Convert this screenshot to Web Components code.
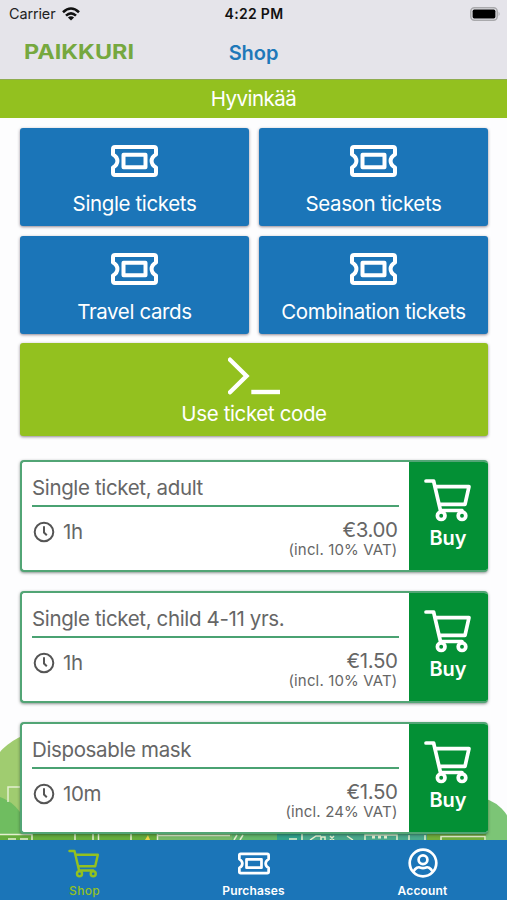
<!DOCTYPE html>
<html lang="en">
<head>
<meta charset="utf-8">
<title>Paikkuri</title>
<style>
  body {
    margin: 0;
    background: #fdfdfe;
    font-family: Inter, "Liberation Sans", sans-serif;
  }
</style>
</head>
<body>
<shop-app></shop-app>

<script>
const icons = {
  ticket: `<svg viewBox="0 0 47 32" fill="none" stroke="currentColor" stroke-width="4" stroke-linejoin="round">
    <path d="M4 2H43Q45 2 45 4V9.5Q40.6 12 40.6 16T45 22.5V28Q45 30 43 30H4Q2 30 2 28V22.5Q6.4 20 6.4 16T2 9.5V4Q2 2 4 2Z"/>
    <rect x="12.5" y="9.8" width="22" height="12.4"/></svg>`,
  cart: `<svg viewBox="0 0 48 44" fill="none" stroke="currentColor" stroke-width="3.7" stroke-linecap="round" stroke-linejoin="round">
    <path d="M2 3H9.6L16.5 32.5M10.8 8.7H45L41 26.3H15M16.5 32.5H38"/>
    <circle cx="17.2" cy="37.7" r="3.8"/><circle cx="38" cy="37.7" r="3.8"/></svg>`,
  prompt: `<svg viewBox="0 0 52 38" fill="none" stroke="currentColor" stroke-width="4.4">
    <path d="M2 2.7L18.5 19L2 35.3" stroke-linecap="round" stroke-width="4.4"/><path d="M23.3 35H52"/></svg>`,
  account: `<svg viewBox="0 0 30 30" fill="none" stroke="currentColor" stroke-width="2.7">
    <circle cx="15" cy="15" r="13.3"/><circle cx="15" cy="11.7" r="4.4"/>
    <path d="M5.5 23.5C7.5 19.5 10.5 18.8 12 19.5Q15 20.8 18 19.5C19.5 18.8 22.5 19.5 24.5 23.5"/></svg>`,
  clock: `<svg viewBox="0 0 22 22" fill="none" stroke="currentColor" stroke-width="2">
    <circle cx="11" cy="11" r="9.3"/><path d="M11 5.2V11.5L13.8 14.2"/></svg>`,
  wifi: `<svg viewBox="0 0 18 14">
    <g fill="none" stroke="#111" stroke-width="2.6"><path d="M1 5.2Q9 -2.2 17 5.2"/><path d="M4 8.6Q9 4 14 8.6"/></g>
    <path d="M9 13.6L5.9 10.5Q9 7.9 12.1 10.5Z" fill="#111"/></svg>`,
  battery: `<svg viewBox="0 0 31 14">
    <rect x=".8" y=".8" width="26.4" height="12.4" rx="3.6" fill="none" stroke="#a9a9ac" stroke-width="1.5"/>
    <rect x="2.6" y="2.6" width="22.8" height="8.8" rx="1.6" fill="#000"/>
    <path d="M28.6 4.8Q30.6 7 28.6 9.2Z" fill="#a9a9ac"/></svg>`
};

function define(name, render) {
  customElements.define(name, class extends HTMLElement {
    constructor() {
      super();
      this.attachShadow({ mode: "open" });
    }
    connectedCallback() {
      this.shadowRoot.innerHTML = render(this);
    }
  });
}

define("ui-icon", el => `
  <style>
    :host { display: block; flex: none; }
    svg { display: block; width: 100%; height: 100%; }
  </style>
  ${icons[el.getAttribute("name")]}`);

define("status-bar", () => `
  <style>
    :host { display: grid; grid-template-columns: 1fr auto 1fr; align-items: center; height: 27px; padding: 0 6px 0 9px; font-size: 14px; color: #222; }
    .left { display: flex; align-items: center; gap: 7px; }
    .carrier { font-size: 14.4px; letter-spacing: -.1px; }
    .time { font-weight: 600; letter-spacing: .3px; color: #111; margin-right: 2px; }
    .wifi { width: 18px; height: 14px; }
    .battery { width: 31px; height: 14px; justify-self: end; }
  </style>
  <div class="left"><span class="carrier">Carrier</span><ui-icon class="wifi" name="wifi"></ui-icon></div>
  <span class="time">4:22 PM</span>
  <ui-icon class="battery" name="battery"></ui-icon>`);

define("nav-header", () => `
  <style>
    :host { display: grid; grid-template-columns: 1fr auto 1fr; align-items: center; height: 52px; padding: 0 24px; box-sizing: border-box; }
    .logo { display: block; width: 120px; height: 28px; font-weight: 700; font-size: 19.6px; fill: #76a83f; }
    h1 { margin: 0; font-size: 20px; font-weight: 600; color: #1e78b9; letter-spacing: -.05px; }
  </style>
  <svg class="logo"><text x="0" y="20" textLength="110" lengthAdjust="spacingAndGlyphs">PAIKKURI</text></svg>
  <h1><slot></slot></h1>`);

define("category-button", el => `
  <style>
    :host {
      display: flex; flex-direction: column; align-items: center; box-sizing: border-box;
      height: 98px; padding-top: 17px; border-radius: 3px;
      background: #1b75b8; color: #fff; font-size: 20.5px;
      box-shadow: 0 1px 3px rgba(40, 20, 40, .5);
    }
    ui-icon { width: 47px; height: 32px; }
    span { margin-top: 15px; line-height: 24px; letter-spacing: -.37px; white-space: nowrap; }
    :host([wide]) { height: 93px; padding-top: 14px; background: #93c11f; }
    :host([wide]) ui-icon { width: 52px; height: 38px; }
    :host([wide]) span { margin-top: 7px; }
  </style>
  <ui-icon name="${el.getAttribute("icon")}"></ui-icon>
  <span><slot></slot></span>`);

define("ticket-card", el => `
  <style>
    :host {
      display: flex; box-sizing: border-box; height: 112px; overflow: hidden;
      border: 2px solid #52a575; border-right: 0; border-radius: 4px; background: #fff; color: #666;
      box-shadow: 0 1px 3px rgba(20, 40, 30, .5);
    }
    .info { flex: 1; padding: 0 10px; }
    .title { height: 43px; line-height: 51px; border-bottom: 2px solid #4aa272; font-size: 20.5px; letter-spacing: -.36px; }
    .row { display: flex; justify-content: space-between; }
    .duration { display: flex; align-items: center; height: 22px; margin-top: 14px; gap: 8px; padding-left: 1px; font-size: 20.5px; line-height: 22px; letter-spacing: -.4px; }
    .duration span { padding-bottom: 1px; }
    .duration ui-icon { width: 22px; height: 22px; color: #555; }
    .price { padding: 11px 1.5px 0 0; text-align: right; font-size: 20.5px; line-height: 24px; letter-spacing: -.4px; }
    small { display: block; font-size: 15px; line-height: 16px; letter-spacing: .15px; }
    .buy { display: flex; flex-direction: column; align-items: center; width: 79px; margin: -2px 0; padding: 18px 1px 0 0; box-sizing: border-box; background: #039035; color: #fff; font-weight: 600; font-size: 20px; line-height: 24px; }
    .buy ui-icon { width: 48px; height: 44px; margin-bottom: 4px; }
  </style>
  <div class="info">
    <div class="title"><slot></slot></div>
    <div class="row">
      <div class="duration"><ui-icon name="clock"></ui-icon><span>${el.getAttribute("duration")}</span></div>
      <div class="price">${el.getAttribute("price")}<small>(incl. ${el.getAttribute("vat")} VAT)</small></div>
    </div>
  </div>
  <div class="buy"><ui-icon name="cart"></ui-icon><span>Buy</span></div>`);

define("tab-item", el => `
  <style>
    :host { display: flex; flex-direction: column; align-items: center; color: #fff; font-size: 12px; font-weight: 600; letter-spacing: .15px; }
    :host([active]) { color: #93c11f; font-weight: 500; letter-spacing: .3px; }
    .icon { display: grid; place-items: center; height: 46px; }
    .ticket { width: 32px; height: 23px; }
    .cart { width: 32px; height: 29px; margin-right: 2px; }
    .account { width: 30px; height: 30px; }
    span { line-height: 10px; }
  </style>
  <div class="icon"><ui-icon class="${el.getAttribute("icon")}" name="${el.getAttribute("icon")}"></ui-icon></div>
  <span><slot></slot></span>`);

define("city-backdrop", () => `
  <style>
    :host { display: block; }
    svg { display: block; }
  </style>
  <svg width="507" height="110" viewBox="0 730 507 110">
    <circle cx="46" cy="792" r="61" fill="#a0cc70"/>
    <path d="M0 797Q12 801 20 812L32 840H0Z" fill="#6fbd60"/>
    <circle cx="474" cy="836" r="39" fill="#7cc576"/>
    <rect x="32" y="832" width="128" height="8" fill="#65ad3d"/>
    <rect y="835" width="32" height="5" fill="#65ad3d"/>
    <rect x="157" y="832" width="75" height="8" fill="#77b96a"/>
    <rect x="232" y="832" width="50" height="8" fill="#62b66a"/>
    <rect x="277" y="832" width="24" height="8" fill="#30a18b"/>
    <rect x="301" y="832" width="126" height="8" fill="#49a88c"/>
    <rect x="427" y="832" width="59" height="8" fill="#70ad3c"/>
    <g fill="none" stroke="#e4efd0" stroke-width="1.5">
      <path d="M20 787H8V802M0 834.5H32V840M75 834V840M93 834V840M98.500 834V840M131 834V840M157.500 834V840"/>
      <path d="M8 839H16M20 839H28M158 835.500H230M234 840L237 835M240 840L243 835M289 839H297M302 834V840"/>
      <path d="M310 840L316 836H321M347 836L353 840M365 840V835H397V840M409 835V840M425 835V840M441 840V836.500H485V840"/>
      <path d="M372 837H389" stroke-width="3" stroke-dasharray="3"/>
      <path d="M321 840V837H325V840M330 836L334 840M334 836L330 840"/>
    </g>
    <path d="M145 840L148 835L150 840Z" fill="#e9d447"/>
  </svg>`);

define("shop-app", () => `
  <style>
    :host { display: flex; flex-direction: column; position: relative; height: 900px; overflow: hidden; }
    header { background: #e5e4ea; }
    .city { display: grid; place-items: center; height: 39px; background: #93c11f; color: #fff; font-size: 20.5px; letter-spacing: -.5px; box-shadow: inset 0 1px #8fac50; }
    main { flex: 1; min-height: 0; padding: 10px 19px 0 20px; }
    .categories { display: grid; grid-template-columns: 1fr 1fr; grid-auto-rows: 98px; gap: 9.5px 10px; }
    .categories [wide] { grid-column: span 2; }
    .tickets { display: grid; gap: 19px; margin-top: 19px; }
    city-backdrop { position: absolute; left: 0; bottom: 60px; z-index: -1; }
    footer { display: grid; grid-template-columns: repeat(3, 1fr); height: 60px; background: #1b75b8; }
  </style>
  <city-backdrop></city-backdrop>
  <header>
    <status-bar></status-bar>
    <nav-header>Shop</nav-header>
  </header>
  <div class="city">Hyvinkää</div>
  <main>
    <div class="categories">
      <category-button icon="ticket">Single tickets</category-button>
      <category-button icon="ticket">Season tickets</category-button>
      <category-button icon="ticket">Travel cards</category-button>
      <category-button icon="ticket">Combination tickets</category-button>
      <category-button icon="prompt" wide>Use ticket code</category-button>
    </div>
    <div class="tickets">
      <ticket-card duration="1h" price="€3.00" vat="10%">Single ticket, adult</ticket-card>
      <ticket-card duration="1h" price="€1.50" vat="10%">Single ticket, child 4-11 yrs.</ticket-card>
      <ticket-card duration="10m" price="€1.50" vat="24%">Disposable mask</ticket-card>
    </div>
  </main>
  <footer>
    <tab-item icon="cart" active>Shop</tab-item>
    <tab-item icon="ticket">Purchases</tab-item>
    <tab-item icon="account">Account</tab-item>
  </footer>`);
</script>
</body>
</html>
